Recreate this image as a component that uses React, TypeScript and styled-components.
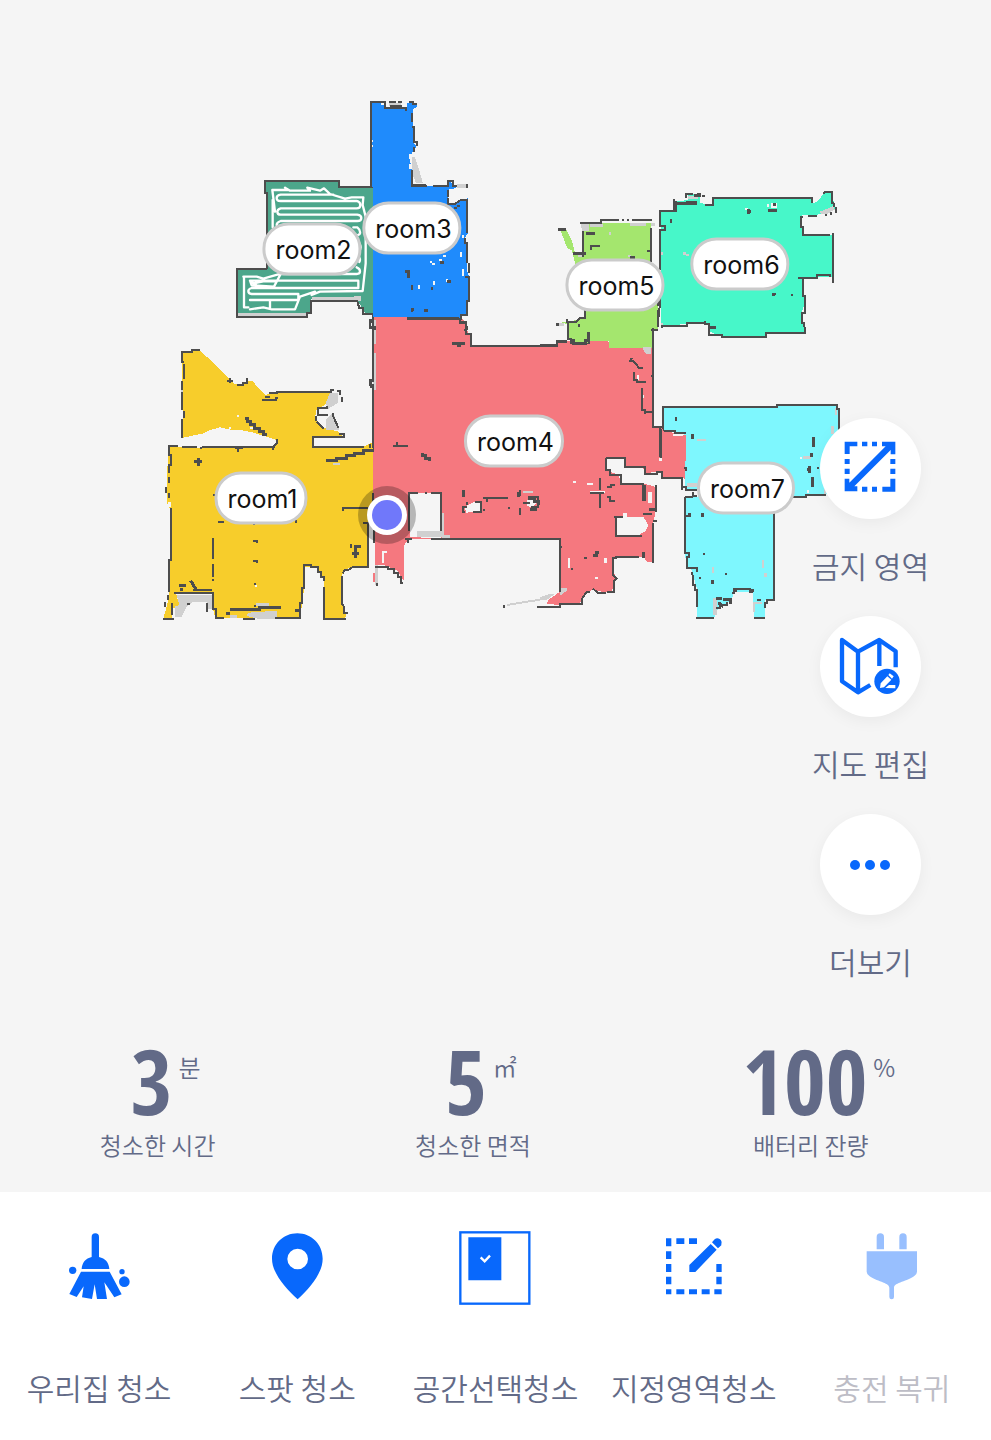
import React from "react";
import styled, { createGlobalStyle } from "styled-components";

const color = {
  page: "#f5f5f5",
  surface: "#ffffff",
  ink: "#626a87",
  muted: "#bdbdc6",
  accent: "#0868fc",
  accentSoft: "#98bffe",
  wall: "#4d4d4d",
  scan: "#d0d0d0",
};

const GlobalStyle = createGlobalStyle`
  *, *::before, *::after { box-sizing: border-box; }
  body {
    margin: 0;
    background: ${color.page};
    color: ${color.ink};
    font-family: "Noto Sans CJK KR", "Noto Sans", sans-serif;
    font-weight: 350;
  }
`;

const Screen = styled.div`
  display: flex;
  flex-direction: column;
  min-height: 100vh;
`;

const Stage = styled.main`
  flex: 1;
  display: grid;
  align-items: start;
`;

const MapArea = styled.section`
  grid-area: 1 / 1;
  position: relative;
  width: 100%;
`;

const MapDrawing = styled.svg`
  display: block;
  width: 100%;
  height: auto;
`;

const RoomTag = styled.button<{ $x: number; $y: number }>`
  position: absolute;
  left: ${(p) => (p.$x / 991) * 100}%;
  top: ${(p) => (p.$y / 640) * 100}%;
  transform: translate(-50%, -50%);
  height: 53px;
  padding: 0 7px 0 10px;
  border: 3px solid #cbcbcb;
  border-radius: 26px;
  background: ${color.surface};
  color: #111;
  font-family: Inter, "Noto Sans", sans-serif;
  font-size: 25px;
  font-weight: 400;
  line-height: 44px;
`;

const SideRail = styled.nav`
  grid-area: 1 / 1;
  justify-self: end;
  z-index: 1;
  display: flex;
  flex-direction: column;
  gap: 29px;
  margin: 418px 62px 0 0;
`;

const SideAction = styled.button`
  display: flex;
  flex-direction: column;
  align-items: center;
  gap: 24px;
  padding: 0;
  border: 0;
  background: none;
  color: inherit;
  font: inherit;
  font-size: 30px;
  line-height: 44px;
`;

const Disc = styled.span`
  display: grid;
  place-items: center;
  width: 101px;
  height: 101px;
  border-radius: 50%;
  background: ${color.surface};
  box-shadow: 0 4px 16px rgba(0, 0, 0, 0.05);
`;

const Stats = styled.dl`
  display: grid;
  grid-template-columns: 7fr 7fr 8fr;
  margin: 0;
  padding-bottom: 29px;
`;

const Stat = styled.div`
  display: flex;
  flex-direction: column-reverse;
  align-items: center;
`;

const StatLabel = styled.dt`
  font-size: 24px;
  line-height: 36px;
`;

const StatValue = styled.dd`
  display: flex;
  align-items: flex-start;
  gap: 6px;
  margin: 0;
  padding-left: 16px;
  font-family: "Noto Sans ExtraCondensed", "Open Sans Condensed", "Roboto Condensed", Roboto, sans-serif;
  font-size: 90px;
  font-weight: 600;
  line-height: 94px;
`;

const Unit = styled.span`
  font-family: "Noto Sans CJK KR", sans-serif;
  font-size: 24px;
  font-weight: 350;
  line-height: 68px;
`;

const ActionBar = styled.nav`
  display: grid;
  grid-template-columns: repeat(5, 1fr);
  padding: 39px 0 31px;
  background: ${color.surface};
`;

const Action = styled.button`
  display: flex;
  flex-direction: column;
  align-items: center;
  gap: 60px;
  padding: 0;
  border: 0;
  background: none;
  color: ${color.ink};
  font: inherit;
  font-size: 30px;
  line-height: 44px;
  white-space: nowrap;

  &:disabled {
    color: ${color.muted};
  }
`;

const ActionIcon = styled.svg`
  width: 74px;
  height: 74px;
  fill: ${color.accent};
`;

/* ---------- floor plan ---------- */

type Block = {
  at: [number, number];
  fill: string;
  area: string;
  walls: string;
  scan?: string;
  holes?: string;
  thick?: string;
};

const blocks: Record<string, Block> = {
  room1: {
    at: [150, 340],
    fill: "#f7cd2b",
    area:
      "M95 38L125 32H150L190 68L235 112L250 130L280 135L295 122H307L325 145L345 165L380 158L545 155L540 175L525 195L500 208L495 235L525 265L565 275L580 290H490V320H640L670 305V552H655V680H610L582 690L575 710V790L590 825L585 835H522V720L505 685L465 680L462 750L455 800L450 833H195L188 800V760H78L88 795L70 805L65 836H40L50 800L58 762V660L62 640V505L53 500L50 440L55 320H375L380 300L350 290L310 278L270 270H245L210 262L180 270L160 280L100 293Z",
    holes: "M238 268h6v-6h-6zM262 232h6v-6h-6zM300 262h10v6h-10zM55 485h8v15h-8zM130 318h25v6h-25zM314 735h7v6h-7z",
    scan:
      "M80 765H185V808H172V785H130L110 800L95 830H75V800L88 795ZM295 818L380 812V838H330L290 828ZM240 825h20v10h-20zM540 158h25v30l-30 18l-8-15zM528 238l22-20l18 52h-40zM93 125h6v80h-6zM550 370h20v6h-20zM318 790h40v8h-40z",
    walls:
      "M92 36H125V30H150M95 36V66H103M101 72V118M95 122V150M95 155V210M101 212V235M95 238V293M230 122H248M240 115V130M262 135H280V128H292V115M335 181H378V173H385M345 172H360M358 160H382V155H545M540 150H552M562 152H570V165M575 170V185M532 197V205H505V225H535M497 228V242M500 245L522 266M550 218V230L566 265M568 282H582V290H488V320H642M660 312V325M380 297V310L370 320V330M375 320H264V335M264 320H155M152 320V328M140 320H95M85 318H57V345H62V375H56V400M56 410V430M48 440V460M57 460V475M62 505V660H56V755M670 0V122H662V140H670V325M575 503H655M578 503V513M668 460V515M640 548H655V680H610L595 690H585L578 700M188 465H195M205 545H222M312 555V548M437 540V550M188 595V657M188 672V712M188 718V724M310 603H322V610M310 662H322V668M316 728V734M316 795V802M72 760H188M130 750H185M188 755V808H197V833H222M55 765V780M45 785V800M172 790V815M38 838H72M110 793H120M65 790V825M278 838H315M375 835H450V790H457V745H462V675H482V682H505V695H512V712H523V722M522 740V838H588M575 708V790L582 800V820H595M602 612V625",
    thick:
      "M228 820H240M240 808H330V802H392M435 812H450M86 738H108M95 745V752M122 722L138 748M133 365H155M145 355V378M285 235H292V245H302V255H315V265H328V275H340V285H352M255 323H278M527 362H560V355H590V348H615V340H642V332H672M632 620H618V655M605 640H628",
  },
  room4: {
    at: [360, 310],
    fill: "#f5787f",
    area:
      "M40 18H300L318 40L325 75H335V105H590V93H745L750 115H878V350H905L940 370L978 375V480L985 520L965 500H905V485H885L860 490L850 475H795L790 445H740L738 480L775 495L785 520H850L885 530L888 600L880 640V755H860L850 740H765L758 780L770 805L755 845L735 848L700 838L675 850L660 880L600 885L560 882L565 870L600 845V687H145L133 705V815L110 780L70 765H45V690H40ZM38 790H48V815H38Z",
    holes:
      "M150 548H242V685H215L150 680ZM765 620H850L865 645L855 665L830 678H768ZM315 590L345 575L365 580L360 605L318 608ZM500 572L515 565L530 580L515 592L500 588ZM790 610h10v10h-10zM66 722h14v6h-8v30h-6zM25 550h16v140h-16zM625 745h6v30h-6zM732 745h8v14h-8zM705 800h8v8h-8zM690 542h45v8h-45zM640 512h8v6h-8zM680 520h20v6h-20zM830 195h6v14h-6zM845 255h6v8h-6zM898 445h8v8h-8zM865 545h10v35h-10z",
    scan:
      "M170 662H242V680H170ZM38 30h9v72h-9zM38 130h9v110h-9zM243 610h9v70h-9zM245 675h25v8h-25zM852 112h20v20h-14l-6-8zM488 542h32v6h-32zM440 882l50-8v6l-50 8zM490 874l50-8v6l-50 8zM540 862l30-10h15l-25 18h-20zM45 765h8v60h-8zM600 835h20v8l-20 14z",
    walls:
      "M300 18V35H318V72H332V107H590V95H622M32 35H40V55H30V30M38 55V210H30V225H38V390M40 380V425M100 408H145M110 395V408M145 548H175M195 548H200M212 548H242V662M148 548V662M25 548V765M40 550H25M42 660V700M212 687H600V845M600 712H606M45 770H85V778H102V788H115V802H122V818H130M50 820V828M145 690V700M135 687H155M530 890H600V883H665V868L680 845H690M698 835L715 850H738M740 845H762V812L770 806L758 795V745H768V740H838M880 640V758M888 525V605M880 632H890M850 612H875M768 622V678H845M762 622H790M738 445V480H750V495H782V522H850V570H858M738 445H795V472H855V492H890V485H907V505H965V540M907 485V505M878 60V350H905V355M900 355V442M978 375V370H945V363H920V355H905M973 475H980M808 152H818L830 165L838 175H850M822 185V210H830V217H858M845 235V300H855V305H880M855 305V312M315 605H310V590H320M320 585V575M345 577H362V605H340M370 563H445M380 563V575M470 555H480V540M505 560H535V590H515V600M490 578H510M480 595V615M443 594H450M370 600H376M690 548H732M720 505V540M720 548V595M742 532H752V524H765M740 562H750V574H765M673 745H680M635 775V780M315 58V64M433 886V893M873 198H878",
    thick:
      "M140 23H300M282 95V102H295V108H300V100H315M188 430V438H198V446H208V452M310 540V560M475 545V560M505 565H525V575H536V584M510 598H530M635 90V97H655H690M855 525V570M850 725V745M868 600H885M700 738H710V728H718",
  },
  room2: {
    at: [220, 90],
    fill: "#4ca68b",
    area:
      "M135 273H358V292H458V675H440L418 640L405 625H275L270 665L262 680H50V536H140V310H135Z",
    scan: "M50 668H262V678H50ZM275 622H405V634H275ZM402 618h20v14h-20z",
    walls:
      "M140 536V310H135V273H358V292H458M140 536H50V682H262V668H272V634H412L418 655H430V672H458M458 675V690H450V712H465V720",
  },
  room3: {
    at: [220, 90],
    fill: "#1f8bfc",
    area:
      "M453 38H585L592 50L578 58V112L582 118V160L590 168L575 190L570 210L575 240L577 288H680L690 275L710 290L685 310V340L700 345L720 330L743 325V430L735 445L740 460V540L748 560L745 640L740 672L715 685H560V680H458V292H453Z",
    holes:
      "M498 38h62v12h-62zM484 38h8v8h-8zM455 150h5v6h-5zM455 165h5v6h-5zM566 192h8v14h-8zM566 222h8v16h-8zM636 520h8v6h-8zM630 514h6v6h-6zM658 508h8v6h-8zM670 494h8v6h-8zM720 486h6v14h-6zM594 584h6v14h-6zM640 574h6v12h-6zM678 568h6v8h-6zM725 538h8v20h-8zM735 443h8v14h-8zM726 434h6v10h-6zM688 296h22v28h-22z",
    scan:
      "M508 38h35v10h-35zM576 200h8l18 55l6 24h-20l-12-30zM712 282h25v12h-25z",
    walls:
      "M452 292V37H495V54H558V64M508 35H528M535 35H545M568 35H578V42H592M576 68V95M576 110H583V155H590V168M582 172V185M576 240V288H620M640 288H683V272H698V288H712M740 283V295M683 300V320M683 325V342H705L722 330H742V430M735 445V460H742V520M746 520V550M735 562H746V633H740V675H722V688H705M576 585V600M575 655V665M740 708V720M720 688V700H740",
    thick:
      "M555 544H565V565M580 288H618M510 50H545M560 685H718M612 662H625M575 660H583M632 596H640M682 575H692M708 350V358M716 345V352M660 518H672",
  },
  room5: {
    at: [540, 180],
    fill: "#a4e66e",
    area:
      "M130 130H333V245L355 360V445L338 450L335 505H208V482H150L135 495L100 490L85 470V435L60 425H85L135 415V390L118 300L105 250L95 210L82 205L65 160L60 148H78L95 180L105 218H130Z",
    scan:
      "M122 130h25v22h-15v35h-6v-35zM150 132h40v8h-40zM270 130h48v8h-48zM332 130h12v8h-12zM115 222h16v10h-16zM52 430h20v8h-20zM208 157h6v8h-6zM265 224h8v8h-8zM310 500h22v22h-12v-12h-10z",
    walls:
      "M120 128H183V121H238M246 121H252M262 121H268M275 121H336M334 145V245M130 152V232M153 210V198H180M320 213H333M80 418V425H110L118 415H135V390M85 425V478H95M355 360V378M358 383V390M355 395V440M333 450H355M340 445V540M0 495H50V484H82M118 432V440M270 537L278 535",
    thick:
      "M55 148H78M100 220H138M138 162H165M270 232H285M48 434H58M90 482H102V492H138V482H146V455M357 390V412",
  },
  room6: {
    at: [540, 180],
    fill: "#47f7c9",
    area:
      "M362 95L405 90V65L445 60V42H480L490 72H520L522 55H815L820 70L835 62L855 35H875L885 85L830 105H785V165H880V290H790V340L795 370L783 400L795 455H678V470H545L510 455L505 432H440L362 438Z",
    holes: "M680 72h8v8h-8zM692 70h20v14h-20zM615 84h8v6h-8zM480 50h10v18h-10z",
    scan:
      "M445 48h30v10h-30zM840 95l20-8l20-10l4 12l-25 14h-16zM430 216h8v8h-8zM438 222h10v6h-10zM362 215h6v10h-6zM362 430h6v10h-6z",
    walls:
      "M360 270V150H374V138H360V94H408V62M402 58V90M410 72H440V66H472M438 55V42H458M470 42H480V50M487 48H494M495 75H520V55H817V70M850 40L856 36H875V68L883 72V82M888 82V98M872 96V105M858 102V108M805 108H830M790 110H783V140H789V165H870M880 158V308M870 290V285H830V293H775M790 293V348H796V400H785V430H792V440M796 440V458H678V470H545V464H508V432H495V424M494 430H440V437H365V445M360 355V385M755 342V348M393 118V130",
    thick:
      "M412 72H472M463 46H480M625 88V102M620 94H634M683 91H712M698 74H708M697 343H706M705 338V346M510 444H528",
  },
  room7: {
    at: [640, 390],
    fill: "#7ef7fe",
    area:
      "M68 50H410V45H590L597 60V312H498L495 320H403V630H375V683H343L338 605H283L275 630L235 655L222 683H172V600L155 540L140 533L135 490V320H175V300L135 295L138 135L105 125L68 118Z",
    holes: "M138 300H175V314H138ZM235 650l20-5v8l-20 10zM480 200h6v6h-6zM500 300h8v8h-8zM100 132h30v6h-30z",
    scan:
      "M170 146h28v8h-28zM140 280h30v10h-30zM574 108h8v24h-8zM584 55h6v20h-6zM490 198h22v8h-22zM552 298h6v14h-6zM215 530h8v20h-8zM365 510h8v24h-8zM372 548h8v12h-8zM218 625h12v50h-12zM338 635h8v30h-8zM345 635h20v8h-20z",
    walls:
      "M68 118V51H410V45H590V56H597V120M68 118L75 124H105V130H138M62 118V205M108 80V94M138 232V242M130 290H138V300H172M135 320H160M160 305V318H172M455 320H497V314H558M403 368V630H380V640H375V655M134 320V488H148V500H140V533H172V545M155 545V555M158 555V585H165V600H172V652M138 378H145M193 488V496M258 548V554M172 680V684H222M343 684H375M338 605H330V598H283V610H275M228 655H240V645H260V635M350 630H362M535 232V238M178 565H184",
    thick:
      "M158 132V146M148 370V382M187 368V382M521 140V172M508 228V248M500 240H510M519 260V290M516 188V200M219 570V582M278 602H290M330 602H342M228 626H245M250 628H272V642M235 638L250 650",
  },
};

const drawOrder = ["room4", "room1", "room2", "room3", "room5", "room6", "room7"];

const cleaningPath =
  "M158 412V330L165 365L157 300H205L195 293L210 302H270L262 293L300 302L312 295L330 312L375 326L395 322H430L428 345L437 380V520L428 603L300 605L275 615L285 605L240 620L225 658H155L130 652L90 658M340 314H182Q170 316 170 324Q170 333 182 333H410Q421 336 421 345Q421 355 410 355H182Q172 358 172 365Q172 374 182 374H412Q424 376 424 384Q424 393 412 393H182Q170 397 170 405M400 412H412Q422 420 420 430Q418 436 405 436M410 452Q422 460 422 472Q420 485 410 490M410 495Q424 505 418 516M410 532Q420 536 420 544Q420 552 410 552H182L162 590L95 586L90 572H415V594H95Q85 597 85 603Q85 611 95 612H235V630H90M150 630V655M70 560H110L130 566L180 552M72 560V652H85M90 572L115 590M100 580L130 574H170";

const rooms = [
  { name: "room1", x: 261, y: 498 },
  { name: "room2", x: 312, y: 249 },
  { name: "room3", x: 412, y: 228 },
  { name: "room4", x: 514, y: 441 },
  { name: "room5", x: 615, y: 285 },
  { name: "room6", x: 740, y: 264 },
  { name: "room7", x: 746, y: 488 },
];

function FloorBlock({ block, children }: { block: Block; children?: React.ReactNode }) {
  const [x, y] = block.at;
  return (
    <g transform={`translate(${x} ${y}) scale(0.33333)`} fill="none" strokeLinecap="butt">
      <g shapeRendering="crispEdges">
        <path d={block.area} fill={block.fill} />
        {block.holes && <path d={block.holes} fill={color.page} />}
        {block.scan && <path d={block.scan} fill={color.scan} />}
        <path d={block.walls} stroke={color.wall} strokeWidth="6" />
        {block.thick && <path d={block.thick} stroke={color.wall} strokeWidth="9" />}
      </g>
      {children}
    </g>
  );
}

function FloorPlan() {
  return (
    <MapArea aria-label="지도">
      <MapDrawing viewBox="0 0 991 640" aria-hidden="true">
        {drawOrder.map((name) => (
          <FloorBlock key={name} block={blocks[name]}>
            {name === "room2" && (
              <path d={cleaningPath} stroke="#fff" strokeWidth="7" strokeLinejoin="round" strokeLinecap="round" />
            )}
          </FloorBlock>
        ))}
        <circle cx="387" cy="515" r="29" fill="#000" fillOpacity="0.25" />
        <circle cx="387" cy="515" r="20" fill="#fff" />
        <circle cx="387" cy="515" r="15" fill="#7078fa" />
      </MapDrawing>
      {rooms.map((room) => (
        <RoomTag key={room.name} type="button" $x={room.x} $y={room.y}>
          {room.name}
        </RoomTag>
      ))}
    </MapArea>
  );
}

/* ---------- icons ---------- */

const RestrictedIcon = () => (
  <svg width="52" height="56" viewBox="614 151 156 168" fill={color.accent} aria-hidden="true">
    <path d="M616 153h38v14h-23v23h-15zM668 153h16v14h-16zM698 153h15v14h-15zM728 153h40v38h-14v-13L645 287h9v15h-38v-38h14v12L739 167h-11zM616 205h15v15h-15zM616 234h15v16h-15zM753 205h15v15h-15zM753 234h15v16h-15zM668 288h16v15h-16zM698 288h15v15h-15zM753 264h15v39h-39v-15h24z" />
  </svg>
);

const MapEditIcon = () => (
  <svg width="62" height="60" viewBox="119 113 186 180" fill="none" aria-hidden="true">
    <path d="M213 257L176 279L128 246V122L176 157L240 122L289 156V204M176 157V279M240 124V200" stroke={color.accent} strokeWidth="13" strokeLinejoin="round" />
    <circle cx="263" cy="246" r="38" fill={color.accent} />
    <path d="M242 266L244 252L264 231L276 241L254 264ZM267 227L271 222L283 231L278 238ZM258 266L269 257H288V267Z" fill="#fff" />
  </svg>
);

const MoreIcon = () => (
  <svg width="42" height="12" viewBox="0 0 42 12" fill={color.accent} aria-hidden="true">
    <circle cx="6" cy="6" r="5" />
    <circle cx="21" cy="6" r="5" />
    <circle cx="36" cy="6" r="5" />
  </svg>
);

const BroomIcon = () => (
  <ActionIcon viewBox="186 92 222 222" aria-hidden="true">
    <path d="M275 110a11 11 0 0 1 22 0V170C316 174 327 187 328 206H245C246 187 257 174 275 170Z" />
    <path d="M243 214H329L365 282L343 291L313 246L321 296H291L284 252L276 296L246 291L251 258L230 290L208 281Z" />
    <circle cx="218" cy="210" r="11" />
    <circle cx="366" cy="214" r="8" />
    <circle cx="373" cy="244" r="16" />
  </ActionIcon>
);

const PinIcon = () => (
  <ActionIcon viewBox="781 92 222 222" aria-hidden="true">
    <path fillRule="evenodd" d="M893 99C935 99 969 132 969 175C969 217 933 261 894 297C855 261 817 217 817 175C817 132 851 99 893 99ZM894 145a31 31 0 1 0 0 62a31 31 0 1 0 0-62Z" />
  </ActionIcon>
);

const RoomSelectIcon = () => (
  <ActionIcon viewBox="175 92 222 222" aria-hidden="true">
    <rect x="182" y="96" width="207" height="214" fill="none" stroke={color.accent} strokeWidth="7" />
    <path d="M206 111H305V240H206Z" />
    <path d="M243 171L255 183L271 166" fill="none" stroke="#fff" strokeWidth="7" />
  </ActionIcon>
);

const ZoneIcon = () => (
  <ActionIcon viewBox="770 92 222 222" aria-hidden="true">
    <path d="M797 114h16v24h-16zM828 114h24v17h-24zM866 114h24v17h-24zM797 153h16v23h-16zM797 191h16v24h-16zM797 229h16v23h-16zM797 267h16v15h-16zM828 267h24v15h-24zM866 267h24v15h-24zM904 267h24v15h-24zM942 267h22v15h-22zM948 191h16v24h-16zM948 229h16v23h-16z" />
    <path d="M867 194L931 131L949 148L885 215H867ZM935 126L943 117Q950 111 958 116Q966 121 963 132L963 135L953 144Z" />
  </ActionIcon>
);

const PlugIcon = () => (
  <ActionIcon viewBox="165 92 222 222" aria-hidden="true">
    <g fill={color.accentSoft}>
      <path d="M230 110a11 11 0 0 1 22 0V147H230ZM298 110a11 11 0 0 1 22 0V147H298Z" />
      <path d="M200 153H351V214Q351 222 342 228C325 242 282 247 282 262V290Q282 297 275 297Q268 297 268 290V262C268 247 226 242 209 228Q200 222 200 214Z" />
    </g>
  </ActionIcon>
);

/* ---------- content ---------- */

const sideActions = [
  { label: "금지 영역", Icon: RestrictedIcon },
  { label: "지도 편집", Icon: MapEditIcon },
  { label: "더보기", Icon: MoreIcon },
];

const stats = [
  { value: "3", unit: "분", label: "청소한 시간" },
  { value: "5", unit: "㎡", label: "청소한 면적" },
  { value: "100", unit: "%", label: "배터리 잔량" },
];

const actions = [
  { label: "우리집 청소", Icon: BroomIcon },
  { label: "스팟 청소", Icon: PinIcon },
  { label: "공간선택청소", Icon: RoomSelectIcon },
  { label: "지정영역청소", Icon: ZoneIcon },
  { label: "충전 복귀", Icon: PlugIcon, disabled: true },
];

export default function App() {
  return (
    <Screen>
      <GlobalStyle />
      <Stage>
        <FloorPlan />
        <SideRail>
          {sideActions.map(({ label, Icon }) => (
            <SideAction key={label} type="button">
              <Disc>
                <Icon />
              </Disc>
              {label}
            </SideAction>
          ))}
        </SideRail>
      </Stage>
      <Stats>
        {stats.map(({ value, unit, label }) => (
          <Stat key={label}>
            <StatLabel>{label}</StatLabel>
            <StatValue>
              {value}
              <Unit>{unit}</Unit>
            </StatValue>
          </Stat>
        ))}
      </Stats>
      <ActionBar>
        {actions.map(({ label, Icon, disabled }) => (
          <Action key={label} type="button" disabled={disabled}>
            <Icon />
            {label}
          </Action>
        ))}
      </ActionBar>
    </Screen>
  );
}
